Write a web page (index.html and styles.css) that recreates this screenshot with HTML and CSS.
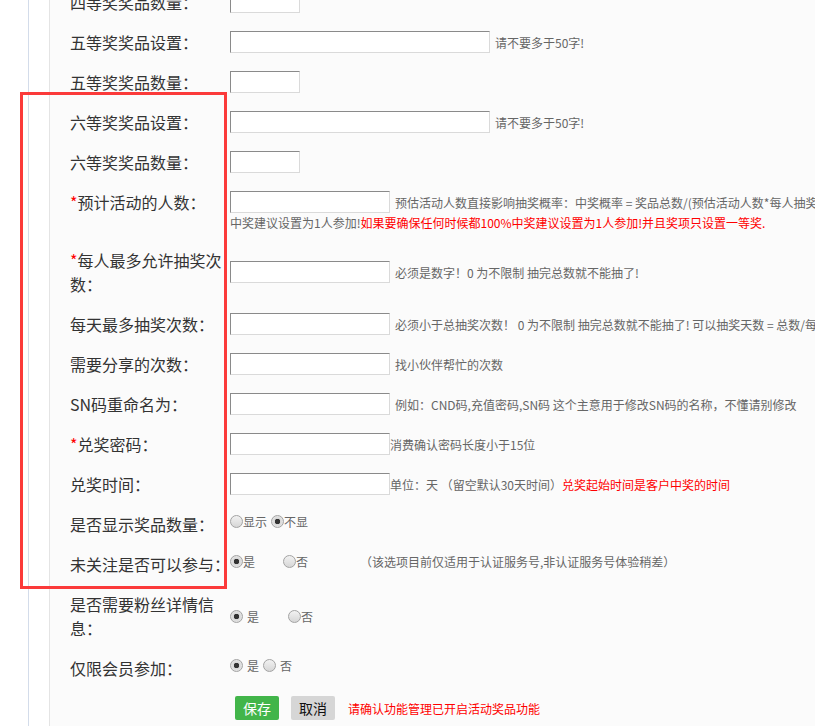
FILE: index.html
```html
<!DOCTYPE html>
<html lang="zh-CN">
<head>
<meta charset="utf-8">
<title>奖品设置</title>
<link rel="stylesheet" href="styles.css">
</head>
<body>
<div class="frame">
  <div class="panel">
    <form class="form">
      <div class="row">
        <div class="label">四等奖奖品数量：</div>
        <div class="ctl"><input class="inp w-s" type="text"></div>
      </div>
      <div class="row">
        <div class="label">五等奖奖品设置：</div>
        <div class="ctl"><input class="inp w-l" type="text"><span class="hint">请不要多于50字!</span></div>
      </div>
      <div class="row">
        <div class="label">五等奖奖品数量：</div>
        <div class="ctl"><input class="inp w-s" type="text"></div>
      </div>
      <div class="row">
        <div class="label">六等奖奖品设置：</div>
        <div class="ctl"><input class="inp w-l" type="text"><span class="hint">请不要多于50字!</span></div>
      </div>
      <div class="row">
        <div class="label">六等奖奖品数量：</div>
        <div class="ctl"><input class="inp w-s" type="text"></div>
      </div>
      <div class="row">
        <div class="label"><span class="req">*</span>预计活动的人数：</div>
        <div class="ctl-block">
          <div class="ctl"><input class="inp w-m" type="text"><span class="hint">预估活动人数直接影响抽奖概率：中奖概率 = 奖品总数/(预估活动人数*每人抽奖次数) 如果要100%</span></div>
          <div class="line2">中奖建议设置为1人参加!<span class="red">如果要确保任何时候都100%中奖建议设置为1人参加!并且奖项只设置一等奖.</span></div>
        </div>
      </div>
      <div class="row mid">
        <div class="label"><span class="req">*</span>每人最多允许抽奖次数：</div>
        <div class="ctl"><input class="inp w-m" type="text"><span class="hint">必须是数字！0 为不限制 抽完总数就不能抽了!</span></div>
      </div>
      <div class="row">
        <div class="label">每天最多抽奖次数：</div>
        <div class="ctl"><input class="inp w-m" type="text"><span class="hint">必须小于总抽奖次数！ 0 为不限制 抽完总数就不能抽了! 可以抽奖天数 = 总数/每天次数</span></div>
      </div>
      <div class="row">
        <div class="label">需要分享的次数：</div>
        <div class="ctl"><input class="inp w-m" type="text"><span class="hint">找小伙伴帮忙的次数</span></div>
      </div>
      <div class="row">
        <div class="label">SN码重命名为：</div>
        <div class="ctl"><input class="inp w-m" type="text"><span class="hint">例如：CND码,充值密码,SN码 这个主意用于修改SN码的名称，不懂请别修改</span></div>
      </div>
      <div class="row">
        <div class="label"><span class="req">*</span>兑奖密码：</div>
        <div class="ctl"><input class="inp w-m" type="text"><span>消费确认密码长度小于15位</span></div>
      </div>
      <div class="row">
        <div class="label">兑奖时间：</div>
        <div class="ctl"><input class="inp w-m" type="text"><span>单位：天 （留空默认30天时间） </span><span class="red">兑奖起始时间是客户中奖的时间</span></div>
      </div>
      <div class="row">
        <div class="label">是否显示奖品数量：</div>
        <div class="ctl radios"><span class="radio"></span><span>显示</span><span class="radio on gap-s"></span><span>不显</span></div>
      </div>
      <div class="row">
        <div class="label">未关注是否可以参与：</div>
        <div class="ctl radios"><span class="radio on"></span><span>是</span><span class="radio gap-l"></span><span>否</span><span class="note">（该选项目前仅适用于认证服务号,非认证服务号体验稍差）</span></div>
      </div>
      <div class="row mid">
        <div class="label">是否需要粉丝详情信息：</div>
        <div class="ctl radios"><span class="radio on"></span><span class="txt-sp">是</span><span class="radio gap-m"></span><span>否</span></div>
      </div>
      <div class="row">
        <div class="label">仅限会员参加：</div>
        <div class="ctl radios"><span class="radio on"></span><span class="txt-sp">是</span><span class="radio gap-xs"></span><span class="txt-sp">否</span></div>
      </div>
      <div class="row">
        <div class="label"></div>
        <div class="ctl"><button type="button" class="btn btn-save">保存</button><button type="button" class="btn btn-cancel">取消</button><span class="red btn-note">请确认功能管理已开启活动奖品功能</span></div>
      </div>
    </form>
  </div>
</div>
<div class="highlight"></div>
</body>
</html>
```
FILE: styles.css
```css
html, body {
  margin: 0;
  padding: 0;
  height: 726px;
  overflow: hidden;
  background: #ffffff;
}
body {
  font-family: "Noto Sans CJK SC", "Microsoft YaHei", "Liberation Sans", sans-serif;
  position: relative;
}
.frame {
  margin-left: 28px;
  border-left: 1px solid #d3dcea;
  height: 726px;
}
.panel {
  margin-left: 20px;
  border-left: 1px solid #e4e4e4;
  background: #fbfbfb;
  height: 726px;
  overflow: hidden;
}
.form {
  margin-top: -18px;
  padding-left: 20px;
  width: 1200px;
}
.row {
  display: flex;
  align-items: flex-start;
  padding: 8px 0;
}
.row.mid {
  align-items: center;
}
.label {
  width: 160px;
  flex: none;
  font-size: 16px;
  line-height: 24px;
  color: #333333;
}
.req {
  color: #ff0000;
}
.ctl {
  display: flex;
  align-items: center;
  height: 24px;
  font-size: 12px;
  color: #666666;
  white-space: nowrap;
}
.ctl-block {
  display: block;
}
.line2 {
  font-size: 12px;
  line-height: 18px;
  color: #666666;
  white-space: nowrap;
}
.inp {
  box-sizing: border-box;
  height: 22px;
  margin: 0;
  padding: 0 3px;
  border: 1px solid;
  border-color: #8a8a8a #dadada #dadada #8a8a8a;
  background: #ffffff;
  flex: none;
}
.w-s { width: 70px; }
.w-m { width: 160px; }
.w-l { width: 260px; }
.hint {
  margin-left: 5px;
}
.red {
  color: #ff0000;
}
.radios {
  height: 18px;
}
.radio {
  box-sizing: border-box;
  width: 13px;
  height: 13px;
  border-radius: 50%;
  border: 1px solid #a3a3a3;
  background: linear-gradient(#f2f2f2, #d6d6d6);
  flex: none;
}
.radio.on {
  background: radial-gradient(circle, #333333 0, #333333 2.5px, #d8d8d8 3px, #eeeeee 100%);
}
.gap-s { margin-left: 4px; }
.gap-l { margin-left: 28px; }
.gap-m { margin-left: 29px; }
.gap-xs { margin-left: 4px; }
.txt-sp { margin-left: 4px; }
.note {
  margin-left: 52px;
}
.btn {
  height: 24px;
  padding: 0 8px;
  border: 0;
  border-radius: 2px;
  font-family: inherit;
  font-size: 14px;
  line-height: 24px;
  cursor: pointer;
}
.btn-save {
  margin-left: 5px;
  background: #42b54a;
  color: #ffffff;
}
.btn-cancel {
  margin-left: 12px;
  background: #d6d6d6;
  color: #111111;
}
.btn-note {
  margin-left: 13px;
  font-size: 12px;
}
.highlight {
  position: absolute;
  left: 20px;
  top: 92px;
  width: 207px;
  height: 497px;
  box-sizing: border-box;
  border: 3px solid #fb3a3a;
  pointer-events: none;
}
```
